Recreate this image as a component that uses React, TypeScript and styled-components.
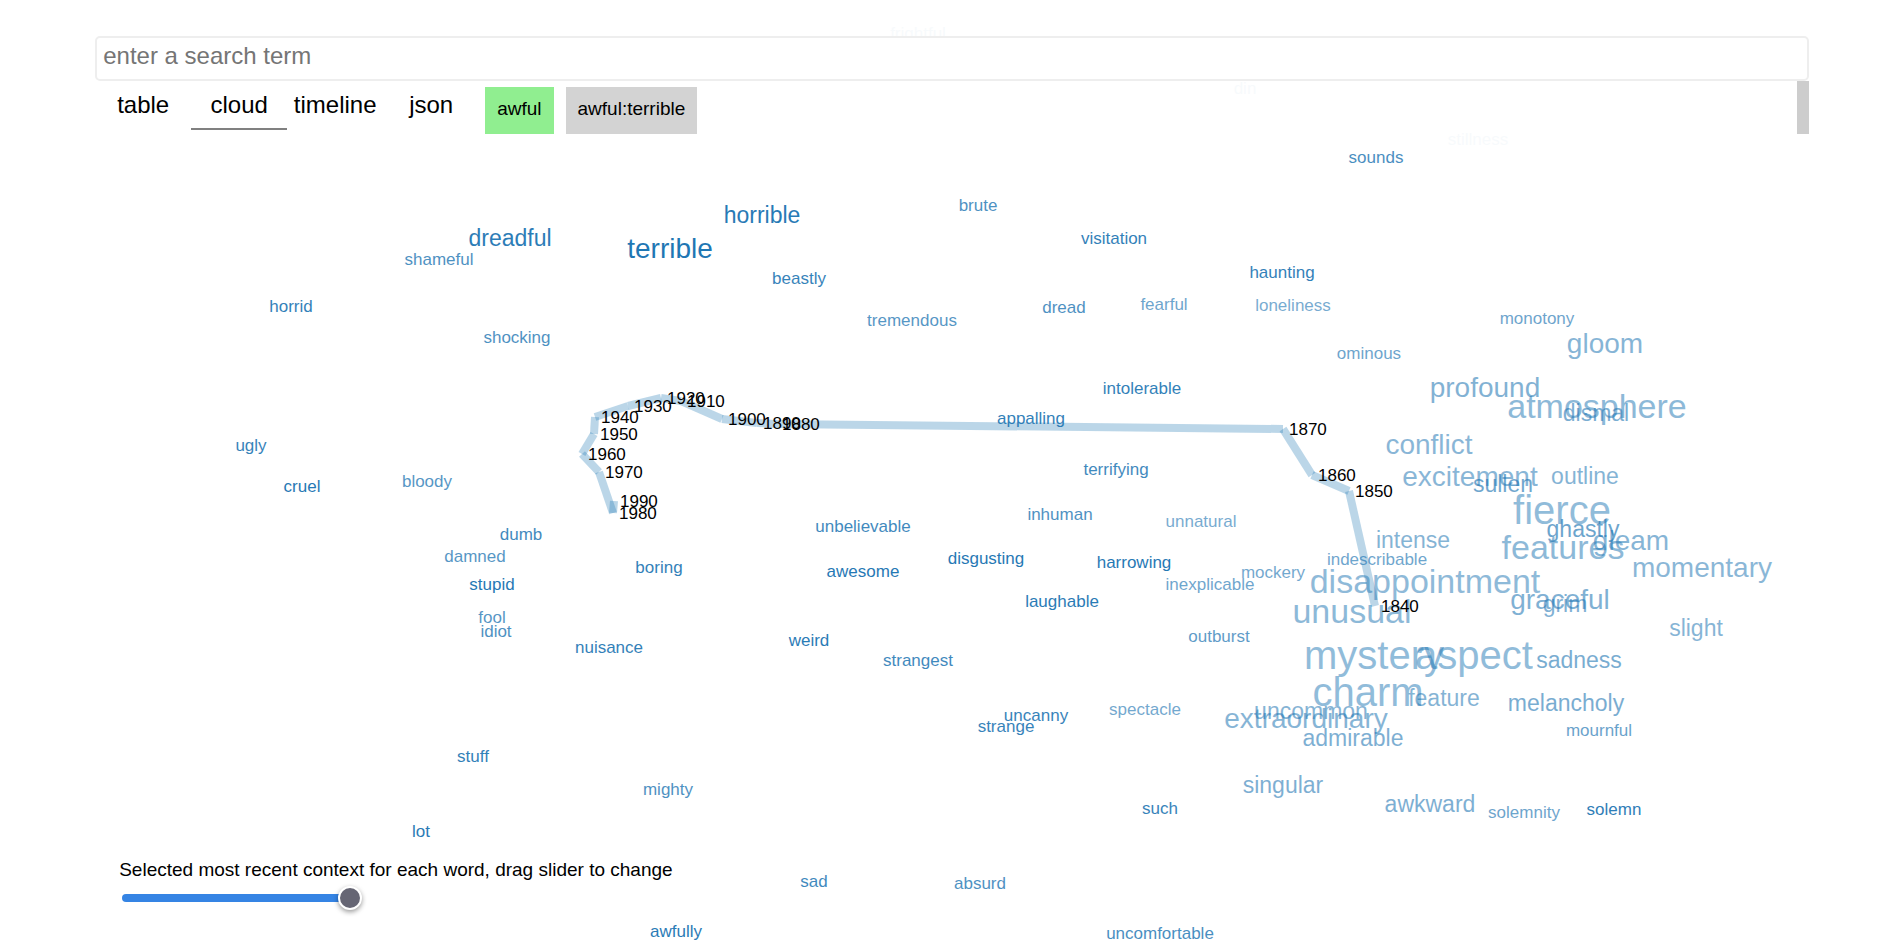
import React, { useState } from "react";
import styled, { createGlobalStyle } from "styled-components";

type Word = [text: string, x: number, y: number, size: number, opacity: number];
type Stop = [year: string, x: number, y: number];

const WORDS: Word[] = [
  ["frightful", 918, 39, 17, 0.03],
  ["din", 1245, 94, 17, 0.03],
  ["stillness", 1478, 145, 17, 0.03],
  ["sounds", 1376, 163, 17, 0.82],
  ["brute", 978, 211, 17, 0.8],
  ["horrible", 762, 223, 23, 0.97],
  ["visitation", 1114, 244, 17, 0.92],
  ["dreadful", 510, 246, 23, 0.95],
  ["terrible", 670, 258, 28, 1],
  ["shameful", 439, 265, 17, 0.8],
  ["haunting", 1282, 278, 17, 0.92],
  ["beastly", 799, 284, 17, 0.9],
  ["fearful", 1164, 310, 17, 0.66],
  ["loneliness", 1293, 311, 17, 0.61],
  ["horrid", 291, 312, 17, 0.92],
  ["dread", 1064, 313, 17, 0.8],
  ["monotony", 1537, 324, 17, 0.66],
  ["tremendous", 912, 326, 17, 0.76],
  ["shocking", 517, 343, 17, 0.8],
  ["gloom", 1605, 353, 28, 0.54],
  ["ominous", 1369, 359, 17, 0.66],
  ["intolerable", 1142, 394, 17, 0.92],
  ["profound", 1485, 397, 28, 0.56],
  ["atmosphere", 1597, 418, 34, 0.51],
  ["dismal", 1596, 421, 23, 0.59],
  ["appalling", 1031, 424, 17, 0.92],
  ["ugly", 251, 451, 17, 0.9],
  ["conflict", 1429, 454, 28, 0.53],
  ["terrifying", 1116, 475, 17, 0.86],
  ["outline", 1585, 484, 23, 0.55],
  ["excitement", 1470, 486, 28, 0.53],
  ["bloody", 427, 487, 17, 0.76],
  ["cruel", 302, 492, 17, 0.98],
  ["sullen", 1503, 492, 23, 0.64],
  ["inhuman", 1060, 520, 17, 0.8],
  ["fierce", 1562, 524, 40, 0.49],
  ["unnatural", 1201, 527, 17, 0.61],
  ["unbelievable", 863, 532, 17, 0.86],
  ["ghastly", 1583, 537, 23, 0.66],
  ["dumb", 521, 540, 17, 0.86],
  ["intense", 1413, 548, 23, 0.55],
  ["gleam", 1631, 550, 28, 0.54],
  ["features", 1563, 559, 34, 0.51],
  ["damned", 475, 562, 17, 0.76],
  ["disgusting", 986, 564, 17, 0.98],
  ["indescribable", 1377, 565, 17, 0.65],
  ["harrowing", 1134, 568, 17, 0.98],
  ["boring", 659, 573, 17, 0.92],
  ["awesome", 863, 577, 17, 0.98],
  ["momentary", 1702, 577, 28, 0.52],
  ["mockery", 1273, 578, 17, 0.63],
  ["stupid", 492, 590, 17, 0.98],
  ["inexplicable", 1210, 590, 17, 0.65],
  ["disappointment", 1425, 593, 34, 0.5],
  ["laughable", 1062, 607, 17, 0.96],
  ["graceful", 1560, 609, 28, 0.57],
  ["grim", 1565, 612, 23, 0.57],
  ["unusual", 1352, 623, 34, 0.51],
  ["fool", 492, 623, 17, 0.76],
  ["slight", 1696, 636, 23, 0.54],
  ["idiot", 496, 637, 17, 0.8],
  ["outburst", 1219, 642, 17, 0.72],
  ["weird", 809, 646, 17, 0.96],
  ["nuisance", 609, 653, 17, 0.92],
  ["strangest", 918, 666, 17, 0.86],
  ["aspect", 1474, 669, 40, 0.49],
  ["sadness", 1579, 668, 23, 0.6],
  ["mystery", 1374, 669, 40, 0.49],
  ["charm", 1368, 706, 40, 0.49],
  ["feature", 1444, 706, 23, 0.55],
  ["melancholy", 1566, 711, 23, 0.6],
  ["spectacle", 1145, 715, 17, 0.63],
  ["uncommon", 1311, 719, 23, 0.55],
  ["uncanny", 1036, 721, 17, 0.9],
  ["extraordinary", 1306, 728, 28, 0.54],
  ["strange", 1006, 732, 17, 0.9],
  ["mournful", 1599, 736, 17, 0.68],
  ["admirable", 1353, 746, 23, 0.58],
  ["stuff", 473, 762, 17, 0.92],
  ["singular", 1283, 793, 23, 0.58],
  ["mighty", 668, 795, 17, 0.8],
  ["awkward", 1430, 812, 23, 0.58],
  ["such", 1160, 814, 17, 0.9],
  ["solemn", 1614, 815, 17, 0.94],
  ["solemnity", 1524, 818, 17, 0.66],
  ["lot", 421, 837, 17, 0.96],
  ["sad", 814, 887, 17, 0.86],
  ["absurd", 980, 889, 17, 0.8],
  ["awfully", 676, 937, 17, 0.96],
  ["uncomfortable", 1160, 939, 17, 0.82],
];

const TRAIL: Stop[] = [
  ["1840", 1375, 606],
  ["1850", 1349, 491],
  ["1860", 1312, 475],
  ["1870", 1283, 429],
  ["1880", 776, 424],
  ["1890", 757, 423],
  ["1900", 722, 419],
  ["1910", 681, 401],
  ["1920", 661, 398],
  ["1930", 628, 406],
  ["1940", 595, 417],
  ["1950", 594, 434],
  ["1960", 582, 454],
  ["1970", 599, 472],
  ["1980", 613, 513],
  ["1990", 614, 501],
];

const TABS = ["table", "cloud", "timeline", "json"];

const GlobalStyle = createGlobalStyle`
  * { box-sizing: border-box; }
  body {
    margin: 0;
    background: #fff;
    color: #000;
    font-family: "Nimbus Sans", Helvetica, "Liberation Sans", Arial, sans-serif;
  }
`;

const Page = styled.div`
  position: relative;
  display: flex;
  flex-direction: column;
  justify-content: space-between;
  min-height: 100vh;
  padding: 36px 5% 30px;
  overflow: hidden;
`;

const Cloud = styled.svg`
  position: absolute;
  inset: 0;
  width: 100%;
  height: 100%;
`;

const CloudWord = styled.text<{ $size: number }>`
  fill: #1f77b4;
  font-size: ${(p) => p.$size}px;
  text-anchor: middle;
  cursor: pointer;
`;

const TrailSegment = styled.line`
  stroke: #1f77b4;
  stroke-width: 8px;
  stroke-opacity: 0.3;
`;

const TrailYear = styled.text`
  fill: #000;
  font-size: 17px;
`;

const Header = styled.header`
  position: relative;
`;

const SearchBox = styled.input`
  display: block;
  width: 100%;
  height: 45px;
  padding: 0 6px 6px;
  border: 2px solid #eee;
  border-radius: 5px;
  background: #fff;
  font-family: inherit;
  font-size: 24px;
  &::placeholder {
    color: #757575;
    opacity: 1;
  }
`;

const Toolbar = styled.div`
  display: flex;
  align-items: flex-start;
  height: 53px;
`;

const Tabs = styled.nav`
  display: flex;
`;

const Tab = styled.button<{ $active: boolean }>`
  width: 96px;
  padding: 10px 0;
  border: 0;
  border-bottom: 2px solid ${(p) => (p.$active ? "#808080" : "transparent")};
  background: none;
  color: #000;
  font-family: inherit;
  font-size: 24px;
  line-height: 27px;
  text-align: center;
  cursor: pointer;
`;

const Chips = styled.div`
  display: flex;
  gap: 12px;
  padding: 6px;
`;

const Chip = styled.button<{ $color: string }>`
  height: 47px;
  padding: 0 12px 4px;
  border: 0;
  background: ${(p) => p.$color};
  color: #000;
  font-family: inherit;
  font-size: 19px;
  cursor: pointer;
`;

const ScrollThumb = styled.div`
  align-self: stretch;
  width: 12px;
  margin-left: auto;
  background: #cdcdcd;
`;

const ContextControl = styled.div`
  position: relative;
  display: flex;
  flex-direction: column;
  align-items: flex-start;
  gap: 1px;
  padding-left: 24px;
`;

const ContextLabel = styled.label`
  font-size: 19px;
  line-height: 22px;
`;

const Slider = styled.input`
  appearance: none;
  width: 240px;
  height: 32px;
  margin: 0 3px;
  background: transparent;
  cursor: pointer;
  &::-webkit-slider-runnable-track {
    height: 8px;
    border-radius: 4px;
    background: linear-gradient(to right, #3584e4 calc(100% - 12px), transparent 0);
  }
  &::-webkit-slider-thumb {
    appearance: none;
    width: 24px;
    height: 24px;
    margin-top: -8px;
    border: 2px solid #fff;
    border-radius: 50%;
    background: #666674;
    box-shadow: 0 2px 5px rgba(0, 0, 0, 0.4);
  }
`;

export default function App() {
  const [tab, setTab] = useState("cloud");
  return (
    <>
      <GlobalStyle />
      <Page>
        <Cloud viewBox="0 0 1904 944" role="img" aria-label="word cloud">
          {TRAIL.slice(1).map(([year, x, y], i) => (
            <TrailSegment key={year} x1={TRAIL[i][1]} y1={TRAIL[i][2]} x2={x} y2={y} />
          ))}
          {WORDS.map(([text, x, y, size, opacity]) => (
            <CloudWord key={text} x={x} y={y} $size={size} opacity={opacity}>
              {text}
            </CloudWord>
          ))}
          {TRAIL.map(([year, x, y]) => (
            <TrailYear key={year} x={x + 6} y={y + 6}>
              {year}
            </TrailYear>
          ))}
        </Cloud>
        <Header>
          <SearchBox type="text" aria-label="search term" placeholder="enter a search term" />
          <Toolbar>
            <Tabs>
              {TABS.map((name) => (
                <Tab key={name} type="button" $active={name === tab} onClick={() => setTab(name)}>
                  {name}
                </Tab>
              ))}
            </Tabs>
            <Chips>
              <Chip type="button" $color="lightgreen">awful</Chip>
              <Chip type="button" $color="lightgray">awful:terrible</Chip>
            </Chips>
            <ScrollThumb />
          </Toolbar>
        </Header>
        <ContextControl>
          <ContextLabel htmlFor="context">
            Selected most recent context for each word, drag slider to change
          </ContextLabel>
          <Slider id="context" type="range" min={0} max={100} defaultValue={100} />
        </ContextControl>
      </Page>
    </>
  );
}
